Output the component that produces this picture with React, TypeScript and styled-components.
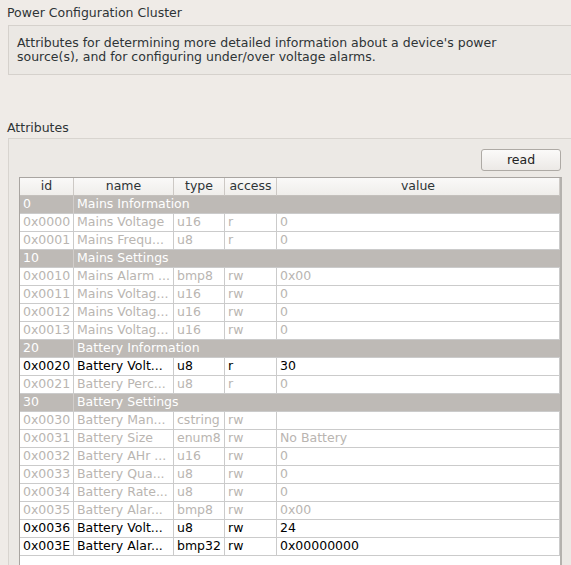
import React from "react";
import styled, { createGlobalStyle } from "styled-components";

const Global = createGlobalStyle`
  html, body { margin: 0; padding: 0; background: #efebe7; overflow: hidden; }
  body {
    width: 571px; height: 565px;
    font-family: "DejaVu Sans", "Noto Sans", sans-serif;
    font-size: 12.5px; color: #2e2e2e;
  }
`;

const Page = styled.div`
  width: 566px;
  padding: 6px 0 0 7px;
`;

const Label = styled.div`
  line-height: 14px;
  height: 14px;
  color: #2e3436;
  white-space: nowrap;
`;

const DescBox = styled.div`
  box-sizing: border-box;
  margin: 5px 0 0 1px;
  width: 565px;
  height: 50px;
  padding: 10px 8px;
  border: 1px solid #d5d1cc;
  background: #ebe8e4;
  line-height: 14px;
  color: #2e3436;
  white-space: nowrap;
`;

const AttrLabel = styled(Label)`
  margin-top: 46px;
`;

const GroupBox = styled.div`
  box-sizing: border-box;
  margin: 3px 0 0 1px;
  width: 565px;
  height: 600px;
  padding: 10px 10px 0 10px;
  border: 1px solid #d8d4cf;
  background: #ece9e5;
  display: flex;
  flex-direction: column;
`;

const ButtonRow = styled.div`
  display: flex;
  justify-content: flex-end;
  padding-right: 1px;
`;

const ReadButton = styled.button`
  box-sizing: border-box;
  width: 80px;
  height: 22px;
  border: 1px solid #aeaaa5;
  border-radius: 3px;
  background: linear-gradient(#fbfaf9, #ece9e6);
  font-family: inherit;
  font-size: 12.5px;
  color: #222;
  padding: 0 0 1px 0;
  line-height: 18px;
`;

const Frame = styled.div`
  box-sizing: border-box;
  margin-top: 6px;
  width: 543px;
  flex: 1;
  border: 1px solid #a9a5a1;
  border-right-width: 2px;
  border-right-color: #b5b2ae;
  background: #ffffff;
`;

const Row = styled.div<{ $group?: boolean }>`
  display: grid;
  grid-template-columns: ${(p) => (p.$group ? "54px 1fr" : "54px 100px 51px 52px 1fr")};
  height: 18px;
  background: ${(p) => (p.$group ? "#bebab6" : "#ffffff")};
`;

const HeaderRow = styled.div`
  display: grid;
  grid-template-columns: 54px 100px 51px 52px 1fr;
  height: 18px;
  background: linear-gradient(#faf9f8, #efedea);
`;

const HeadCell = styled.div`
  box-sizing: border-box;
  border-right: 1px solid #cdc9c5;
  border-bottom: 1px solid #c4c0bc;
  text-align: center;
  line-height: 16px;
  color: #2e3436;
  white-space: nowrap;
  overflow: hidden;
`;

const Cell = styled.div<{ $enabled?: boolean; $group?: boolean }>`
  box-sizing: border-box;
  border-right: 1px solid ${(p) => (p.$group ? "#d2cecb" : "#cbcbcb")};
  border-bottom: 1px solid #cbcbcb;
  padding: 0 3px;
  line-height: 16px;
  white-space: nowrap;
  overflow: hidden;
  color: ${(p) => (p.$group ? "#ffffff" : p.$enabled ? "#000000" : "#b9b5b1")};
`;

const SpanCell = styled(Cell)`
  overflow: visible;
  border-right: none;
`;

type Attr = { id: string; name: string; type: string; access: string; value: string; on?: boolean };
type Group = { gid: string; title: string; items: Attr[] };

const groups: Group[] = [
  {
    gid: "0",
    title: "Mains Information",
    items: [
      { id: "0x0000", name: "Mains Voltage", type: "u16", access: "r", value: "0" },
      { id: "0x0001", name: "Mains Frequ...", type: "u8", access: "r", value: "0" },
    ],
  },
  {
    gid: "10",
    title: "Mains Settings",
    items: [
      { id: "0x0010", name: "Mains Alarm ...", type: "bmp8", access: "rw", value: "0x00" },
      { id: "0x0011", name: "Mains Voltag...", type: "u16", access: "rw", value: "0" },
      { id: "0x0012", name: "Mains Voltag...", type: "u16", access: "rw", value: "0" },
      { id: "0x0013", name: "Mains Voltag...", type: "u16", access: "rw", value: "0" },
    ],
  },
  {
    gid: "20",
    title: "Battery Information",
    items: [
      { id: "0x0020", name: "Battery Volt...", type: "u8", access: "r", value: "30", on: true },
      { id: "0x0021", name: "Battery Perc...", type: "u8", access: "r", value: "0" },
    ],
  },
  {
    gid: "30",
    title: "Battery Settings",
    items: [
      { id: "0x0030", name: "Battery Man...", type: "cstring", access: "rw", value: "" },
      { id: "0x0031", name: "Battery Size", type: "enum8", access: "rw", value: "No Battery" },
      { id: "0x0032", name: "Battery AHr ...", type: "u16", access: "rw", value: "0" },
      { id: "0x0033", name: "Battery Qua...", type: "u8", access: "rw", value: "0" },
      { id: "0x0034", name: "Battery Rate...", type: "u8", access: "rw", value: "0" },
      { id: "0x0035", name: "Battery Alar...", type: "bmp8", access: "rw", value: "0x00" },
      { id: "0x0036", name: "Battery Volt...", type: "u8", access: "rw", value: "24", on: true },
      { id: "0x003E", name: "Battery Alar...", type: "bmp32", access: "rw", value: "0x00000000", on: true },
    ],
  },
];

export default function App() {
  return (
    <>
      <Global />
      <Page>
        <Label>Power Configuration Cluster</Label>
        <DescBox>
          Attributes for determining more detailed information about a device's power
          <br />
          source(s), and for configuring under/over voltage alarms.
        </DescBox>
        <AttrLabel>Attributes</AttrLabel>
        <GroupBox>
          <ButtonRow>
            <ReadButton>read</ReadButton>
          </ButtonRow>
          <Frame>
            <HeaderRow>
              <HeadCell>id</HeadCell>
              <HeadCell>name</HeadCell>
              <HeadCell>type</HeadCell>
              <HeadCell>access</HeadCell>
              <HeadCell>value</HeadCell>
            </HeaderRow>
            {groups.map((g) => (
              <React.Fragment key={g.gid}>
                <Row $group>
                  <Cell $group>{g.gid}</Cell>
                  <SpanCell $group>{g.title}</SpanCell>
                </Row>
                {g.items.map((a) => (
                  <Row key={a.id}>
                    <Cell $enabled={a.on}>{a.id}</Cell>
                    <Cell $enabled={a.on}>{a.name}</Cell>
                    <Cell $enabled={a.on}>{a.type}</Cell>
                    <Cell $enabled={a.on}>{a.access}</Cell>
                    <Cell $enabled={a.on}>{a.value}</Cell>
                  </Row>
                ))}
              </React.Fragment>
            ))}
          </Frame>
        </GroupBox>
      </Page>
    </>
  );
}
